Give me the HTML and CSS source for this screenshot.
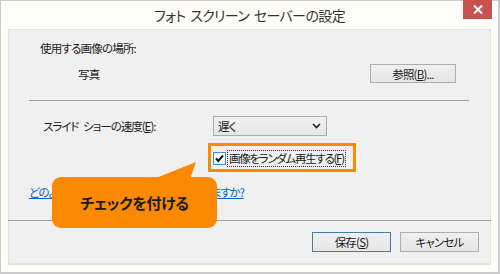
FILE: index.html
```html
<!DOCTYPE html>
<html lang="ja">
<head>
<meta charset="utf-8">
<link rel="stylesheet" href="styles.css">
</head>
<body>
<div class="window">
  <div class="titlebar">
    <span></span>
    <span class="title">フォト スクリーン セーバーの設定</span>
    <span class="close"><svg width="10" height="9" viewBox="0 0 10 9"><path d="M1 0.5 L9 8.5 M9 0.5 L1 8.5" stroke="#fff" stroke-width="2"/></svg></span>
  </div>
  <div class="panel">
    <div class="main">
      <div class="loc-label">使用する画像の場所:</div>
      <div class="loc-row">
        <span class="loc-value">写真</span>
        <button class="btn browse">参照(<u>B</u>)...</button>
      </div>
      <div class="sep"></div>
      <div class="speed-row">
        <span class="speed-label">スライド ショーの速度(<u>E</u>):</span>
        <span class="select"><span>遅く</span><svg width="9" height="6" viewBox="0 0 9 6"><path d="M1 1 L4.5 4.5 L8 1" fill="none" stroke="#222" stroke-width="1.6"/></svg></span>
      </div>
      <div class="check-row">
        <span class="checkbox"><svg width="11" height="11" viewBox="0 0 11 11"><path d="M2 5.5 L4.3 8 L9 2.5" fill="none" stroke="#111" stroke-width="2"/></svg></span>
        <span class="check-label">画像をランダム再生する(<u>F</u>)</span>
      </div>
      <div class="link-row"><a class="link">どのようにスライド ショーをカスタマイズしますか?</a></div>
    </div>
    <div class="footer">
      <button class="btn primary">保存(<u>S</u>)</button>
      <button class="btn">キャンセル</button>
    </div>
    <div class="highlight"></div>
    <div class="callout"><span class="callout-text">チェックを付ける</span></div>
    <svg class="tail" width="56" height="22" viewBox="0 0 56 22"><path d="M2 22 L52 2 L45 22 Z" fill="#fb8a00"/></svg>
  </div>
</div>
</body>
</html>
```
FILE: styles.css
```css
* { box-sizing: border-box; }
html, body { margin: 0; padding: 0; }
body {
  width: 500px;
  height: 274px;
  font-family: "Noto Sans CJK JP", "Noto Sans", sans-serif;
  font-feature-settings: "palt";
  font-size: 11.5px;
  letter-spacing: -0.8px;
  word-spacing: 3px;
  color: #1a1a1a;
  overflow: hidden;
}
.window {
  width: 500px;
  height: 274px;
  background: #fffdf7;
  border: 1px solid #cbcbcb;
  border-right-width: 2px;
  border-bottom-width: 2px;
}
.titlebar {
  height: 28px;
  display: grid;
  grid-template-columns: 1fr auto 1fr;
  align-items: start;
}
.title {
  font-size: 14px;
  color: #333;
  line-height: 15px;
  margin-top: 7px;
  letter-spacing: -0.6px;
  word-spacing: 2px;
}
.close {
  justify-self: end;
  margin-right: 6px;
  margin-top: -1px;
  width: 29px;
  height: 19px;
  background: #c75050;
  display: flex;
  align-items: center;
  justify-content: center;
}
.panel {
  position: relative;
  margin: 0 7px;
  height: 236px;
  background: #f0f0f0;
  box-shadow: inset 0 0 0 1px #e3e3e3, inset 0 -2px 0 #e3e3e3;
  display: flex;
  flex-direction: column;
}
.main {
  height: 191px;
  padding: 0 22px 0 21px;
}
.loc-label {
  padding-left: 11px;
  margin-top: 11px;
  line-height: 16px;
}
.loc-row {
  margin-top: 8px;
  height: 19px;
  display: flex;
  align-items: center;
  justify-content: space-between;
}
.loc-value { padding-left: 49px; }
.btn {
  font: inherit;
  font-size: 11.5px;
  letter-spacing: -0.8px;
  color: #1a1a1a;
  height: 20px;
  width: 79px;
  padding: 0;
  border: 1px solid #adadad;
  background: linear-gradient(#f0f0f0, #e5e5e5);
  line-height: 16px;
}
.btn u { text-underline-offset: 1px; }
.browse {
  width: 86px;
  height: 19px;
  margin-right: 13px;
}
.sep {
  margin-top: 17px;
  height: 1px;
  background: #a0a0a0;
}
.speed-row {
  margin-top: 15px;
  height: 20px;
  display: grid;
  grid-template-columns: 170px 114px;
  padding-left: 14px;
  align-items: center;
}
.speed-label { letter-spacing: -1px; }
.select {
  height: 20px;
  border: 1px solid #acacac;
  background: linear-gradient(#f2f2f2, #e6e6e6);
  display: flex;
  align-items: center;
  justify-content: space-between;
  padding: 0 5px 0 4px;
}
.check-row {
  margin-top: 14px;
  height: 17px;
  display: flex;
  align-items: center;
  padding-left: 184px;
  gap: 1px;
}
.checkbox {
  width: 13px;
  height: 13px;
  border: 1px solid #3c8ee0;
  background: #fff;
  display: flex;
  align-items: center;
  justify-content: center;
}
.check-label {
  border: 1px dotted #333;
  padding: 0 1px;
  line-height: 15px;
  letter-spacing: -1.3px;
}
.link-row {
  margin-top: 17px;
  line-height: 16px;
}
.link {
  color: #0066cc;
  text-decoration: underline;
  letter-spacing: -1.2px;
  word-spacing: 0;
}
.footer {
  flex: 1;
  border-top: 1px solid #a0a0a0;
  display: flex;
  justify-content: flex-end;
  align-items: flex-start;
  gap: 9px;
  padding: 11px 12px 0 0;
}
.primary { border-color: #3c7fb1; }
.highlight {
  position: absolute;
  left: 200px;
  top: 114px;
  width: 148px;
  height: 29px;
  border: 3px solid #fb8a00;
}
.callout {
  position: absolute;
  left: 44px;
  top: 148px;
  width: 165px;
  height: 51px;
  border-radius: 9px;
  background: #fb8a00;
  display: flex;
  align-items: center;
  justify-content: center;
}
.callout-text {
  color: #1a1a1a;
  font-weight: 700;
  font-size: 15px;
  letter-spacing: -0.3px;
}
.tail {
  position: absolute;
  left: 136px;
  top: 131px;
}
```
